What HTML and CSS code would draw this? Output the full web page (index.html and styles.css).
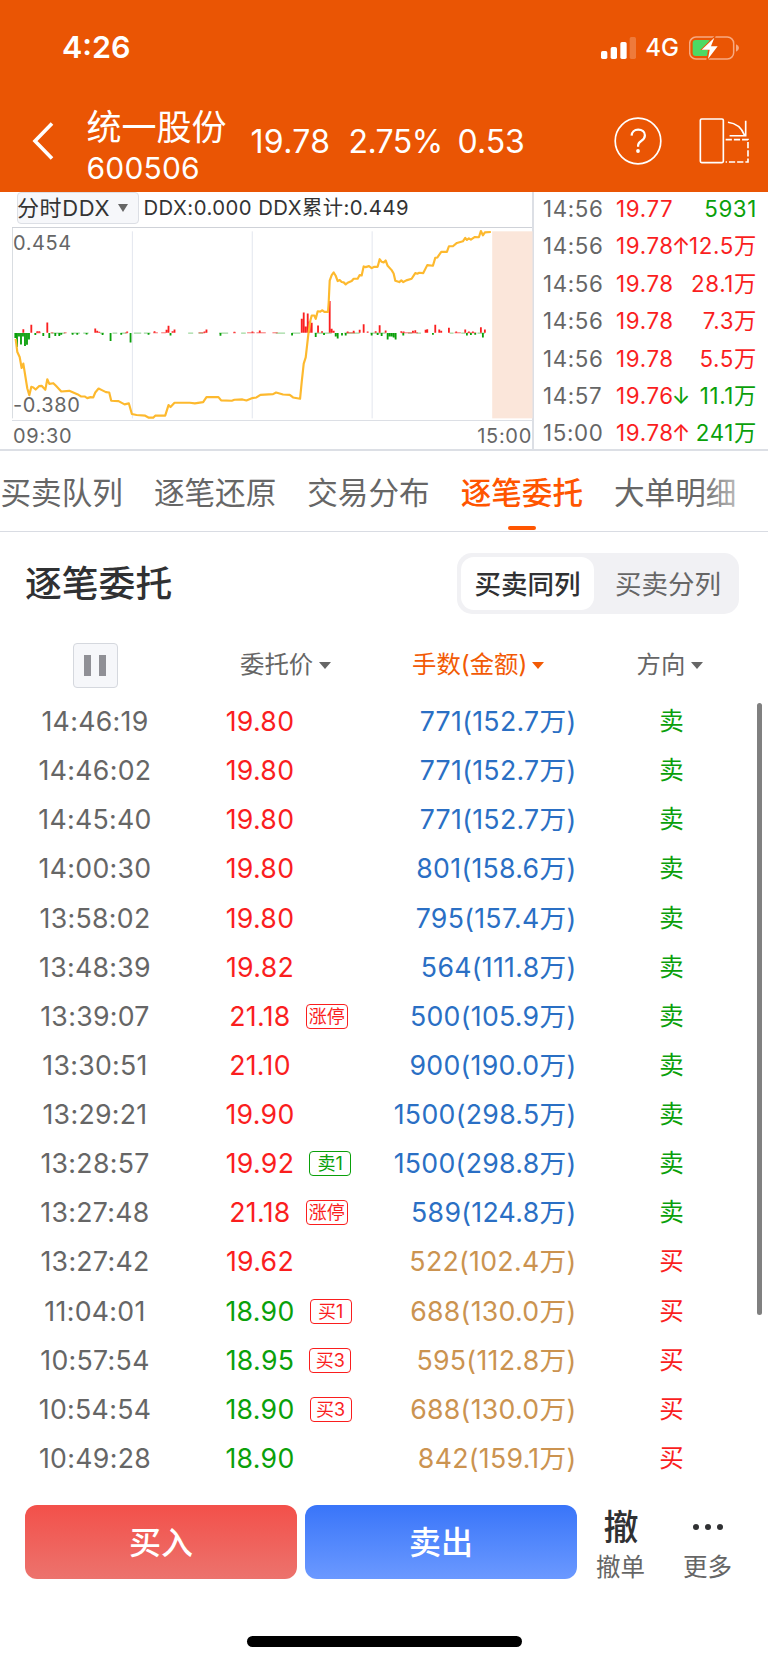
FILE: index.html
```html
<!DOCTYPE html>
<html lang="zh-CN">
<head>
    <meta charset="UTF-8">
    <meta name="viewport" content="width=device-width, initial-scale=1.0">
    <title>统一股份 600506</title>
    <link rel="stylesheet" href="styles.css">
</head>
<body>

    <header>
        <div class="statusbar">
            <span class="clock">4:26</span>
            <div class="status-icons">
                <svg class="signal" viewBox="0 0 105 66">
                    <g fill="#fff">
                        <rect x="0" y="42" width="19" height="24" rx="5"/>
                        <rect x="29" y="30" width="19" height="36" rx="5"/>
                        <rect x="58" y="15" width="19" height="51" rx="5"/>
                        <rect x="86" y="0" width="19" height="66" rx="5" opacity=".22"/>
                    </g>
                </svg>
                <span class="network">4G</span>
                <svg class="battery" viewBox="0 0 150 72">
                    <rect x="2" y="3" width="132" height="66" rx="19" fill="none" stroke="#f7a981" stroke-width="4.5"/>
                    <path d="M141 25q9 4 9 11t-9 11z" fill="#f7a981"/>
                    <rect x="11" y="12" width="54" height="48" rx="9" fill="#4cd964"/>
                    <path d="M76 0L34 42H57L52 72H58L92 31H71L80 0z" fill="#ea5504"/>
                    <path d="M76 5L38 41H62L57 69L86 31H66z" fill="#fff"/>
                </svg>
            </div>
        </div>

        <div class="nav">
            <svg class="back" viewBox="0 0 22 40"><path d="M20 2.5L3 20l17 17.5" fill="none" stroke="#fff" stroke-width="3.6"/></svg>
            <div class="stock">
                <div class="stock-name">统一股份</div>
                <div class="stock-code">600506</div>
            </div>
            <div class="quote">
                <span class="q-price">19.78</span>
                <span class="q-pct">2.75%</span>
                <span class="q-diff">0.53</span>
            </div>
            <div class="help">
                <svg viewBox="0 0 48 48" fill="none" stroke="#fff">
                    <circle cx="24" cy="24" r="22.8" stroke-width="1.7"/>
                    <path d="M17.6 18.6c.2-3.6 2.8-6 6.6-6 3.9 0 6.7 2.3 6.7 5.7 0 2.6-1.3 4.2-3.7 5.7-2.3 1.4-3.1 2.5-3.1 4.5v1.3" stroke-width="2.2"/>
                    <circle cx="24" cy="34" r="1.9" fill="#fff" stroke="none"/>
                </svg>
            </div>
            <svg class="rotate" viewBox="0 0 150 140" fill="none" stroke="#fff" stroke-width="5">
                <rect x="3" y="3" width="70" height="133" rx="4"/>
                <path d="M87 13C112 16 128 28 137 52M141 8V54H92"/>
                <path d="M80 66H148V134H80" stroke-dasharray="19 6"/>
            </svg>
        </div>
    </header>

    <section class="market">
        <div class="chart-box">
            <div class="chart-top">
                <div class="select">分时DDX <i class="caret"></i></div>
                <span class="ddx">DDX:0.000 DDX累计:0.449</span>
            </div>
            <div class="chart">
                <svg viewBox="36 126 1563 582" preserveAspectRatio="none">
                    <rect x="1478" y="136" width="121" height="564" fill="#fbe6da"/>
                    <path d="M397.5 136V700M757.5 136V700M1117.5 136V700" stroke="#e3e6ee" stroke-width="3"/>
                    <path d="M37.5 126V700" stroke="#d9dde1" stroke-width="3"/>

                    <path stroke="#4bb84b" stroke-width="2" d="M154 443H196M214 443H240M250 443H266M300 443H312M338 443H352M362 443H380M402 443H424M432 443H452M565 443H580M596 443H610M658 443H685M724 443H738M828 443H856M876 443H902M945 443H996M1034 443H1080M1112 443H1158M1225 443H1238M1250 443H1264M1350 443H1362M1385 443H1398M1434 443H1456"/>
                    <path stroke="#f82828" stroke-width="2" d="M108 442H122M152 442H160M192 442H200M376 442H384M460 442H474M484 442H498M596 442H616M700 442H708M742 442H765M770 442H798M818 442H834M1040 442H1066M1205 442H1255M1365 442H1384M1402 442H1430"/>

                    <path class="bar-up" d="M70 442V431M94 442V418M112 442V437M118 442V437M142 442V411M286 442V429M292 442V436M298 442V439M382 442V438M464 442V437M500 442V433M506 442V421M518 442V437M524 442V432M614 442V438M620 442V432M704 442V439M758 442V438M780 442V435M906 442V400M912 442V381M918 442V423M924 442V384M930 442V408M936 442V412M955 442V420M967 442V437M990 442V346M996 442V430M1002 442V436M1044 442V438M1062 442V436M1080 442V433M1092 442V416M1104 442V438M1128 442V437M1140 442V419M1158 442V435M1205 442V437M1212 442V438M1240 442V436M1247 442V434M1278 442V433M1283 442V431M1307 442V418M1319 442V432M1325 442V436M1348 442V427M1370 442V438M1397 442V432M1408 442V438M1420 442V438M1444 442V425M1456 442V432"/>
                    <path class="bar-down" d="M46 443V458M51 443V485M57 443V453M63 443V477M69 443V453M75 443V482M81 443V478M87 443V462M106 443V449M130 443V452M148 443V458M166 443V452M178 443V452M184 443V448M218 443V448M232 443V448M260 443V447M308 443V449M332 443V467M364 443V448M392 443V471M446 443V448M512 443V450M662 443V451M877 443V450M948 443V455M973 443V449M1008 443V453M1014 443V459M1027 443V450M1038 443V450M1116 443V450M1134 443V449M1146 443V452M1164 443V462M1170 443V453M1176 443V453M1182 443V456M1188 443V462M1211 443V450M1300 443V448M1402 443V450M1414 443V449M1427 443V448M1450 443V456"/>

                    <path class="line" d="M47 460L52 500 59 515 65 548 70 535 82 610 88 630 94 605 100 607 107 613 117 603 125 602 136 614 142 582 148 596 160 594 168 602 184 619 208 617 220 622 232 627 243 634 254 634 262 639 272 636 280 637 286 622 296 610 306 615 318 621 328 622 334 647 356 648 374 658 387 655 396 687 410 690 436 692 447 698 460 698 466 692 496 692 506 660 512 666 524 653 570 653 585 655 610 651 620 636 656 636 664 646 696 647 704 644 728 643 740 646 758 639 770 637 782 629 820 627 829 622 850 628 870 629 880 637 901 641 906 590 912 535 918 516 926 445 932 405 936 390 944 390 948 400 954 377 962 378 967 374 974 379 985 379 987 350 990 285 996 268 1002 260 1008 270 1014 286 1020 283 1026 289 1032 290 1038 296 1044 291 1056 286 1062 279 1074 279 1080 268 1086 269 1092 242 1098 244 1108 241 1116 247 1124 243 1134 243 1140 220 1146 228 1152 230 1158 224 1164 240 1176 253 1182 263 1187 285 1199 289 1205 284 1211 289 1220 284 1236 279 1247 262 1253 264 1259 261 1271 262 1283 238 1300 240 1307 216 1313 215 1325 198 1342 198 1348 181 1360 181 1372 171 1390 166 1397 156 1402 162 1408 157 1414 161 1426 153 1438 154 1444 135 1450 148 1456 139 1474 138"/>
                </svg>
                <span class="label label-max">0.454</span>
                <span class="label label-min">-0.380</span>
            </div>
            <div class="chart-time">
                <span>09:30</span>
                <span>15:00</span>
            </div>
        </div>

        <div class="ticks">
            <div class="tick"><span>14:56</span><span class="red">19.77</span><span class="green">5931</span></div>
            <div class="tick"><span>14:56</span><span class="red">19.78<b>↑</b></span><span class="red">12.5万</span></div>
            <div class="tick"><span>14:56</span><span class="red">19.78</span><span class="red">28.1万</span></div>
            <div class="tick"><span>14:56</span><span class="red">19.78</span><span class="red">7.3万</span></div>
            <div class="tick"><span>14:56</span><span class="red">19.78</span><span class="red">5.5万</span></div>
            <div class="tick"><span>14:57</span><span class="red">19.76<b class="green">↓</b></span><span class="green">11.1万</span></div>
            <div class="tick"><span>15:00</span><span class="red">19.78<b>↑</b></span><span class="green">241万</span></div>
        </div>
    </section>

    <nav class="tabs">
        <span class="tab">买卖队列</span>
        <span class="tab">逐笔还原</span>
        <span class="tab">交易分布</span>
        <span class="tab active">逐笔委托</span>
        <span class="tab">大单明细</span>
    </nav>

    <section class="orders">
        <div class="orders-head">
            <h2>逐笔委托</h2>
            <div class="segment">
                <span class="seg on">买卖同列</span>
                <span class="seg">买卖分列</span>
            </div>
        </div>

        <div class="row row-head">
            <div class="c-time"><span class="pause"><i></i><i></i></span></div>
            <div class="h-price">委托价<i class="caret"></i></div>
            <div class="h-amount">手数(金额)<i class="caret"></i></div>
            <div class="h-side">方向<i class="caret"></i></div>
        </div>

        <div id="list"></div>
        <div class="scrollbar"></div>
    </section>

    <footer>
        <div class="actions">
            <div class="btn buy">买入</div>
            <div class="btn sell">卖出</div>
            <div class="action">
                <span class="action-icon">撤</span>
                <span class="action-text">撤单</span>
            </div>
            <div class="action">
                <span class="action-icon dots"><i></i><i></i><i></i></span>
                <span class="action-text">更多</span>
            </div>
        </div>
        <div class="home-bar"></div>
    </footer>

    <script>
        // time, price, price color, amount, side, tag
        const orders = [
            ["14:46:19", "19.80", "red", "771(152.7万)", "卖"],
            ["14:46:02", "19.80", "red", "771(152.7万)", "卖"],
            ["14:45:40", "19.80", "red", "771(152.7万)", "卖"],
            ["14:00:30", "19.80", "red", "801(158.6万)", "卖"],
            ["13:58:02", "19.80", "red", "795(157.4万)", "卖"],
            ["13:48:39", "19.82", "red", "564(111.8万)", "卖"],
            ["13:39:07", "21.18", "red", "500(105.9万)", "卖", "涨停"],
            ["13:30:51", "21.10", "red", "900(190.0万)", "卖"],
            ["13:29:21", "19.90", "red", "1500(298.5万)", "卖"],
            ["13:28:57", "19.92", "red", "1500(298.8万)", "卖", "卖1"],
            ["13:27:48", "21.18", "red", "589(124.8万)", "卖", "涨停"],
            ["13:27:42", "19.62", "red", "522(102.4万)", "买"],
            ["11:04:01", "18.90", "green", "688(130.0万)", "买", "买1"],
            ["10:57:54", "18.95", "green", "595(112.8万)", "买", "买3"],
            ["10:54:54", "18.90", "green", "688(130.0万)", "买", "买3"],
            ["10:49:28", "18.90", "green", "842(159.1万)", "买"]
        ];

        const list = document.getElementById("list");

        orders.forEach(([time, price, color, amount, side, tag]) => {
            const sell = side === "卖";
            const tagColor = tag === "卖1" ? "green" : "red";
            const tagHtml = tag ? `<em class="tag ${tagColor}">${tag}</em>` : "";

            list.innerHTML += `
                <div class="row">
                    <div class="c-time">${time}</div>
                    <div class="c-price ${color}"><span>${price}${tagHtml}</span></div>
                    <div class="c-amount ${sell ? "blue" : "gold"}">${amount}</div>
                    <div class="c-side ${sell ? "green" : "red"}">${side}</div>
                </div>`;
        });
    </script>

</body>
</html>
```
FILE: styles.css
```css
* {
    box-sizing: border-box;
    margin: 0;
    padding: 0;
}

body {
    width: 768px;
    height: 1663px;
    overflow: hidden;
    background-color: #fff;
    color: #666;
    font-family: Inter, "Noto Sans CJK SC", sans-serif;
    font-weight: 385;
    white-space: nowrap;
}

i, em {
    font-style: normal;
}

svg {
    display: block;
    flex: none;
}

.red { color: #fa1e1e; }
.green { color: #0aa00a; }
.blue { color: #2a6fc4; }
.gold { color: #cb9350; }

.caret {
    display: inline-block;
    border-left: 6.5px solid transparent;
    border-right: 6.5px solid transparent;
    border-top: 7px solid currentColor;
}

/* header */

header {
    height: 192px;
    background-color: #ea5504;
    color: #fff;
}

.statusbar {
    display: flex;
    align-items: center;
    justify-content: space-between;
    height: 95px;
    padding: 0 29px 0 62px;
}

.clock {
    padding-bottom: 1px;
    font-size: 30.5px;
    font-weight: 600;
    line-height: 40px;
}

.status-icons {
    display: flex;
    align-items: center;
}

.signal {
    width: 35px;
    height: 22px;
}

.network {
    margin: 0 10px 0 9px;
    font-size: 24px;
    font-weight: 450;
    line-height: 28px;
}

.battery {
    width: 50px;
    height: 24px;
}

.nav {
    display: flex;
    align-items: center;
    height: 97px;
    padding: 0 18px 5px 32px;
}

.back {
    width: 22px;
    height: 40px;
}

.stock {
    width: 164px;
    margin-left: 32.5px;
    padding-top: 14px;
}

.stock-name {
    font-size: 35px;
    line-height: 41px;
}

.stock-code {
    font-size: 30px;
    letter-spacing: .2px;
    line-height: 41px;
}

.quote {
    display: grid;
    grid-template-columns: 98px 109px 1fr;
    width: 363.5px;
    padding-top: 1px;
    font-size: 32px;
}

.q-price {
    letter-spacing: .3px;
}

.q-pct {
    letter-spacing: -.6px;
}

.help {
    width: 48px;
    height: 48px;
}

.rotate {
    width: 50px;
    height: 46px;
    margin-left: 36.5px;
}

/* minute chart and ticks */

.market {
    display: flex;
    height: 259px;
    border-bottom: 2px solid #dcdfe5;
}

.chart-box {
    width: 534px;
    padding-left: 12px;
    border-right: 2px solid #dcdfe5;
}

.chart-top {
    display: flex;
    height: 35px;
    margin-left: 5px;
    color: #333;
    line-height: 32px;
}

.select {
    width: 122px;
    height: 32px;
    border: 1px solid #dcdfe5;
    border-radius: 4px;
    background-color: #f6f7fa;
    font-size: 22px;
    letter-spacing: .6px;
    line-height: 31px;
    text-indent: -1px;
}

.select .caret {
    margin: 0 0 4px 1px;
    border-left-width: 5px;
    border-right-width: 5px;
    border-top-width: 8px;
    color: #666;
}

.ddx {
    margin-left: 4.5px;
    font-size: 20.3px;
    letter-spacing: .47px;
}

.chart {
    position: relative;
    height: 194px;
    border-top: 1px solid #cfd2d8;
    border-bottom: 1px solid #dcdfe5;
}

.chart svg {
    width: 520.5px;
    height: 193px;
}

.line {
    fill: none;
    stroke: #fdb92e;
    stroke-width: 6.5;
    stroke-linejoin: round;
}

.bar-up {
    stroke: #fa2020;
    stroke-width: 5.5;
}

.bar-down {
    stroke: #0aa00a;
    stroke-width: 5.5;
}

.label {
    position: absolute;
    left: 1px;
    font-size: 20px;
    letter-spacing: .6px;
    line-height: 24px;
}

.label-max {
    top: 3px;
}

.label-min {
    top: 165px;
}

.chart-time {
    display: flex;
    justify-content: space-between;
    padding: 0 0 0 1px;
    font-size: 20px;
    letter-spacing: .7px;
    line-height: 31px;
}

.ticks {
    flex: 1;
    margin-top: -2px;
    padding: 0 11px 0 9px;
    font-size: 22.3px;
    letter-spacing: .65px;
    line-height: 37.4px;
}

.tick {
    display: grid;
    grid-template-columns: 73px 70px 1fr;
    height: 37.4px;
}

.tick b {
    margin-left: -2px;
    font-weight: 385;
}

.tick span:last-child {
    justify-self: end;
}

/* tabs */

.tabs {
    position: relative;
    display: flex;
    gap: 31px;
    height: 81px;
    padding-left: .5px;
    border-bottom: 1.5px solid #d9dce3;
    font-size: 30.6px;
    line-height: 83px;
}

.tabs::after {
    content: "";
    position: absolute;
    top: 0;
    right: 0;
    width: 70px;
    height: 79px;
    background: linear-gradient(to right, rgba(255, 255, 255, 0), #fff);
}

.tab {
    position: relative;
}

.tab.active {
    color: #ff5500;
    font-weight: 500;
}

.tab.active::after {
    content: "";
    position: absolute;
    left: 47px;
    bottom: 1px;
    width: 28px;
    height: 4px;
    border-radius: 2px;
    background-color: #ff5500;
}

/* orders */

.orders {
    position: relative;
    height: 951px;
}

.orders-head {
    display: flex;
    align-items: center;
    justify-content: space-between;
    padding: 21px 29px 0 25px;
}

h2 {
    color: #303133;
    font-size: 36.8px;
    font-weight: 500;
    line-height: 60px;
}

.segment {
    display: flex;
    width: 282px;
    height: 61px;
    padding: 4px;
    border-radius: 15px;
    background-color: #f1f1f4;
}

.seg {
    flex: 1;
    padding-left: 7px;
    text-align: center;
    font-size: 26.5px;
    line-height: 54px;
}

.seg.on {
    flex: none;
    width: 133px;
    padding-left: 0;
    border-radius: 13px;
    background-color: #fff;
    color: #303133;
    font-weight: 500;
}

.row {
    display: grid;
    grid-template-columns: 190px 140px 246.5px 191.5px;
    height: 49.13px;
    font-size: 26.7px;
    letter-spacing: .3px;
    line-height: 49.13px;
}

.row-head {
    height: 83px;
    padding-top: 19px;
    align-items: center;
    font-size: 24.4px;
    letter-spacing: 0;
}

.row-head .caret {
    margin: 0 0 4px 6px;
}

.h-price {
    padding-left: 50px;
}

.h-amount {
    padding-left: 82px;
    color: #f25a05;
}

.h-amount .caret {
    margin-left: 5px;
}

.h-side {
    padding-left: 60px;
}

.c-time {
    display: flex;
    justify-content: center;
}

.pause {
    display: flex;
    align-items: center;
    justify-content: center;
    gap: 8px;
    width: 45px;
    height: 45px;
    border: 1px solid #d5d8de;
    border-radius: 4px;
    background-color: #f6f7fa;
}

.pause i {
    width: 7px;
    height: 21px;
    background-color: #909096;
}

.c-price, .c-side {
    text-align: center;
}

.c-price span {
    position: relative;
}

.tag {
    position: absolute;
    left: 100%;
    top: 4px;
    width: 42px;
    height: 25px;
    margin-left: 15px;
    border: 1.5px solid currentColor;
    border-radius: 4px;
    font-size: 18px;
    letter-spacing: 0;
    line-height: 23px;
    text-align: center;
}

.c-amount {
    text-align: right;
}

.c-side {
    padding-right: 1px;
    font-size: 24.5px;
}

.scrollbar {
    position: absolute;
    top: 171px;
    right: 6px;
    width: 5px;
    height: 612px;
    border-radius: 3px;
    background-color: #808080;
}

/* bottom bar */

.actions {
    display: flex;
    padding: 22px 0 0 25px;
}

.btn {
    width: 272px;
    height: 74px;
    margin-right: 8px;
    border-radius: 12px;
    color: #fff;
    font-size: 32px;
    font-weight: 500;
    line-height: 75px;
    text-align: center;
}

.buy {
    background: linear-gradient(#f3504a, #ec736d);
}

.sell {
    background: linear-gradient(#3975f9, #6b99ff);
}

.action {
    display: flex;
    flex-direction: column;
    align-items: center;
    width: 86px;
    margin-left: -7px;
    margin-right: 8px;
}

.action-icon {
    height: 44px;
    color: #303133;
    font-size: 35px;
    font-weight: 500;
    line-height: 44px;
}

.dots {
    display: flex;
    align-items: center;
    gap: 6px;
}

.dots i {
    width: 6px;
    height: 6px;
    border-radius: 50%;
    background-color: #303133;
}

.action-text {
    margin-left: -1px;
    font-size: 24.5px;
    line-height: 37px;
}

.home-bar {
    width: 275px;
    height: 11px;
    margin: 50px auto 0;
    border-radius: 6px;
    background-color: #000;
}
```
